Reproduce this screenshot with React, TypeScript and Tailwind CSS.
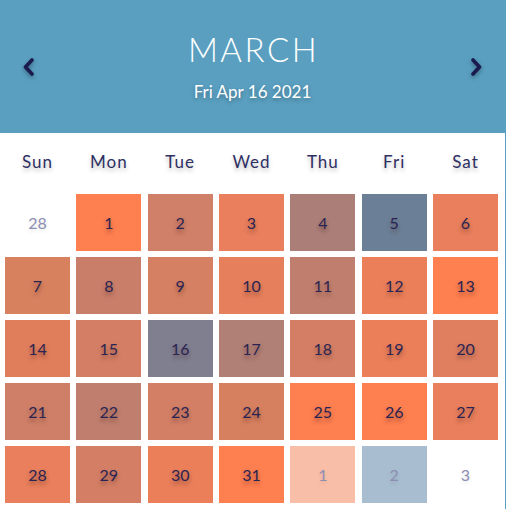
import React from 'react';

type Day = {
  n: number;
  bg: string;
  muted?: boolean;
};

const weekdays = ['Sun', 'Mon', 'Tue', 'Wed', 'Thu', 'Fri', 'Sat'];

// heat colours per day, taken straight from the design
const days: Day[] = [
  { n: 28, bg: 'bg-white', muted: true },
  { n: 1, bg: 'bg-[#fe7f50]' },
  { n: 2, bg: 'bg-[#d07f68]' },
  { n: 3, bg: 'bg-[#e97f5c]' },
  { n: 4, bg: 'bg-[#ab7f77]' },
  { n: 5, bg: 'bg-[#6b7f96]' },
  { n: 6, bg: 'bg-[#e97f5c]' },
  { n: 7, bg: 'bg-[#d7815f]' },
  { n: 8, bg: 'bg-[#c97e6a]' },
  { n: 9, bg: 'bg-[#d58062]' },
  { n: 10, bg: 'bg-[#e67f5c]' },
  { n: 11, bg: 'bg-[#c07f6e]' },
  { n: 12, bg: 'bg-[#ea7f5a]' },
  { n: 13, bg: 'bg-[#fe7f4f]' },
  { n: 14, bg: 'bg-[#e07e5c]' },
  { n: 15, bg: 'bg-[#d47f65]' },
  { n: 16, bg: 'bg-[#807f90]' },
  { n: 17, bg: 'bg-[#b07f76]' },
  { n: 18, bg: 'bg-[#d47f65]' },
  { n: 19, bg: 'bg-[#ea7f5a]' },
  { n: 20, bg: 'bg-[#df7f60]' },
  { n: 21, bg: 'bg-[#cf7f67]' },
  { n: 22, bg: 'bg-[#c07f6e]' },
  { n: 23, bg: 'bg-[#d37f66]' },
  { n: 24, bg: 'bg-[#d7805f]' },
  { n: 25, bg: 'bg-[#fe7f50]' },
  { n: 26, bg: 'bg-[#fe7f50]' },
  { n: 27, bg: 'bg-[#e97f5c]' },
  { n: 28, bg: 'bg-[#e97f5c]' },
  { n: 29, bg: 'bg-[#d47f65]' },
  { n: 30, bg: 'bg-[#ea7f5a]' },
  { n: 31, bg: 'bg-[#fe7f50]' },
  { n: 1, bg: 'bg-[#f9bea8]', muted: true },
  { n: 2, bg: 'bg-[#a8bdd0]', muted: true },
  { n: 3, bg: 'bg-white', muted: true },
];

const Chevron = ({ dir }: { dir: 'left' | 'right' }) => (
  <svg width="14" height="20" viewBox="0 0 14 20" className="drop-shadow-[0_2px_2px_rgba(0,0,0,0.35)]">
    <path
      d={dir === 'left' ? 'M10 3L3.5 10L10 17' : 'M4 3L10.5 10L4 17'}
      stroke="#1b1a4f"
      strokeWidth="3.6"
      fill="none"
      strokeLinecap="round"
      strokeLinejoin="round"
    />
  </svg>
);

export default function App() {
  return (
    <div className="w-[506px] h-[509px] bg-white font-['Lato',sans-serif] border-r border-[#5a9fc0]">
      {/* Header */}
      <div className="h-[133px] bg-[#5a9fc0] flex items-center justify-between px-[22px]">
        <Chevron dir="left" />
        <div className="flex flex-col items-center">
          <div className="text-white text-[33px] leading-[33px] font-light tracking-[2.5px] pl-[2px]">MARCH</div>
          <div className="text-white text-[17px] leading-[18px] mt-[17px] [text-shadow:0_2px_4px_rgba(0,0,0,0.3)]">
            Fri Apr 16 2021
          </div>
        </div>
        <Chevron dir="right" />
      </div>

      {/* Weekdays */}
      <div className="grid grid-cols-7 gap-x-[6.33px] pl-[5px] w-[498px] h-[61px] items-center pb-[3px]">
        {weekdays.map(d => (
          <div
            key={d}
            className="text-center text-[17px] text-[#2e2f63] tracking-[1px] [text-shadow:0_3px_4px_rgba(0,0,0,0.25)]"
          >
            {d}
          </div>
        ))}
      </div>

      {/* Days */}
      <div className="grid grid-cols-7 gap-x-[6.33px] gap-y-[6px] pl-[5px] w-[498px]">
        {days.map((d, i) => (
          <div key={i} className={`h-[57px] flex items-center justify-center ${d.bg}`}>
            <span
              className={`text-[16px] ${
                d.muted
                  ? 'text-[#8c8eb3] [text-shadow:0_2px_4px_rgba(0,0,0,0.12)]'
                  : 'text-[#2a2452] [text-shadow:0_3px_4px_rgba(60,20,20,0.45)]'
              }`}
            >
              {d.n}
            </span>
          </div>
        ))}
      </div>
    </div>
  );
}
